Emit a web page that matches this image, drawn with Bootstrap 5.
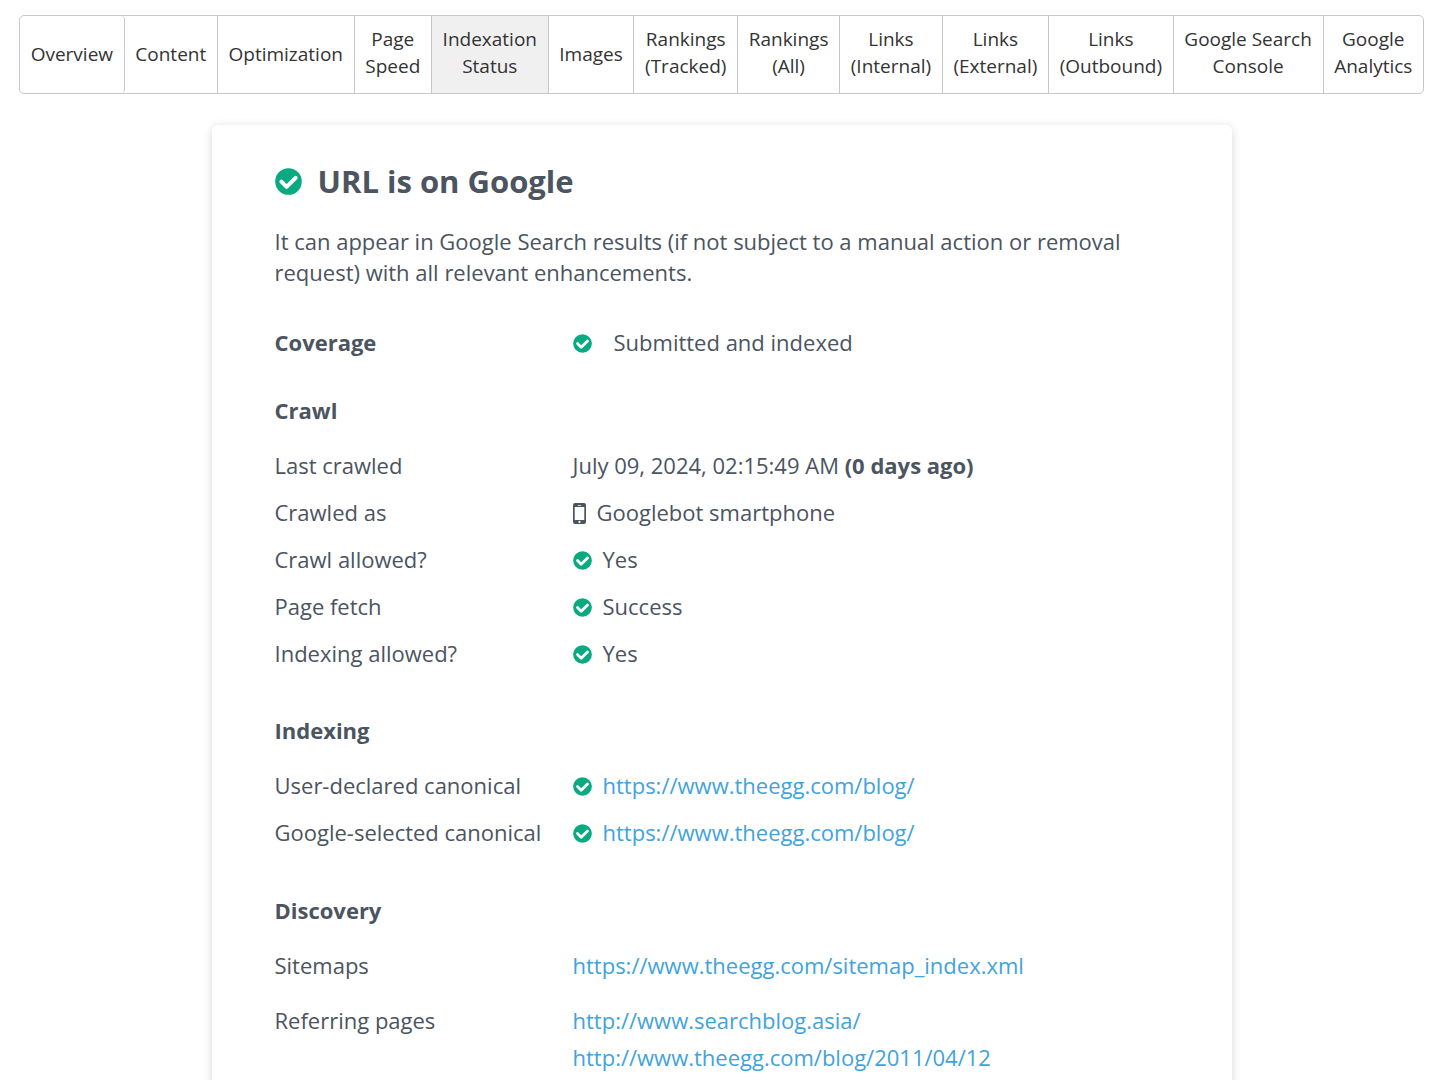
<!DOCTYPE html>
<html lang="en">
<head>
<meta charset="utf-8">
<meta name="viewport" content="width=device-width, initial-scale=1">
<title>Indexation Status</title>
<link rel="stylesheet" href="https://cdn.jsdelivr.net/npm/bootstrap@5.3.0/dist/css/bootstrap.min.css">
<style>
  body { font-family: "Open Sans", "Noto Sans", sans-serif; font-size: 22px; line-height: 31px; color: #4b545f; background: #fff; }
  .page-wrap { padding: 15px 16px 0 19px; }
  .report-tabs { border: 1px solid #c8c8c8; border-radius: 5px; min-height: 79px; }
  .report-tabs a { flex: 1 0 auto; display: flex; align-items: center; justify-content: center; text-align: center; padding: 0 10px; border-left: 1px solid #c8c8c8; color: #333; font-size: 19px; line-height: 27px; text-decoration: none; }
  .report-tabs a:first-child { border-left: 0; border-right: 1px solid #c8c8c8; border-radius: 4px; }
  .report-tabs a:nth-child(2) { border-left: 0; }
  .report-tabs a.two-line { padding-bottom: 4px; }
  .report-tabs a:hover, .report-tabs a.active { background: #f0f0f0; }
  .report { max-width: 1020px; margin: 31px auto 40px; padding: 34px 63px 63px; border: 0; border-radius: 6px; box-shadow: 0 2px 10px rgba(0, 0, 0, .16); color: inherit; }
  .report h1 { font-size: 31px; line-height: 44px; font-weight: 700; margin: 0; gap: 16px; }
  .report h2 { font-size: 22px; line-height: 31px; font-weight: 700; margin: 0 0 24px; }
  .intro { margin: 23px 0 39px; }
  .facts { display: grid; grid-template-columns: 298px minmax(0, 1fr); row-gap: 16px; margin: 0 0 47px; }
  .facts dt { font-weight: 400; }
  .facts dd { margin: 0; display: flex; align-items: center; gap: 11px; }
  .facts.coverage { margin-bottom: 37px; }
  .facts.coverage dt { font-weight: 700; }
  .facts.coverage dd { gap: 22px; }
  .facts.crawl { margin-bottom: 46px; }
  .facts.discovery { row-gap: 24px; margin-bottom: 0; }
  .facts.discovery dd { flex-direction: column; align-items: flex-start; gap: 6px; }
  .facts svg { margin-top: 2px; }
  .report a { color: #41a3dc; text-decoration: none; }
  .report a:hover { text-decoration: underline; }
  .ok { width: 19px; height: 19px; flex: none; }
  h1 .ok { width: 27px; height: 27px; }
  .phone { width: 13px; height: 21px; flex: none; }
</style>
</head>
<body>
<svg class="d-none" aria-hidden="true">
  <symbol id="ok" viewBox="0 0 27 27">
    <circle cx="13.5" cy="13.5" r="13.3" fill="#09a981"/>
    <path d="M6.400 13.600l5.200 5.200 9-9" fill="none" stroke="#fff" stroke-width="4" stroke-linecap="round" stroke-linejoin="round"/>
  </symbol>
</svg>
<div class="page-wrap">
  <nav class="report-tabs d-flex" aria-label="Report sections">
    <a href="#">Overview</a>
    <a href="#">Content</a>
    <a href="#">Optimization</a>
    <a href="#" class="two-line">Page<br>Speed</a>
    <a href="#" class="two-line active" aria-current="page">Indexation<br>Status</a>
    <a href="#">Images</a>
    <a href="#" class="two-line">Rankings<br>(Tracked)</a>
    <a href="#" class="two-line">Rankings<br>(All)</a>
    <a href="#" class="two-line">Links<br>(Internal)</a>
    <a href="#" class="two-line">Links<br>(External)</a>
    <a href="#" class="two-line">Links<br>(Outbound)</a>
    <a href="#" class="two-line">Google Search<br>Console</a>
    <a href="#" class="two-line">Google<br>Analytics</a>
  </nav>
  <main class="card report">
    <h1 class="d-flex align-items-center"><svg class="ok" aria-hidden="true"><use href="#ok"/></svg>URL is on Google</h1>
    <p class="intro">It can appear in Google Search results (if not subject to a manual action or removal request) with all relevant enhancements.</p>
    <dl class="facts coverage">
      <dt>Coverage</dt>
      <dd><svg class="ok" aria-hidden="true"><use href="#ok"/></svg>Submitted and indexed</dd>
    </dl>
    <h2>Crawl</h2>
    <dl class="facts crawl">
      <dt>Last crawled</dt>
      <dd><span>July 09, 2024, 02:15:49 AM <b>(0 days ago)</b></span></dd>
      <dt>Crawled as</dt>
      <dd><svg class="phone" viewBox="0 0 13 21" aria-hidden="true"><path fill="#4b545f" fill-rule="evenodd" d="M2 0h9a2 2 0 0 1 2 2v17a2 2 0 0 1-2 2H2a2 2 0 0 1-2-2V2a2 2 0 0 1 2-2zM1.700 4v13h9.600V4zM4.800 1.900v.9h3.400v-.9zM6.500 17.800a1.100 1.100 0 1 0 0 2.200 1.100 1.100 0 0 0 0-2.200z"/></svg>Googlebot smartphone</dd>
      <dt>Crawl allowed?</dt>
      <dd><svg class="ok" aria-hidden="true"><use href="#ok"/></svg>Yes</dd>
      <dt>Page fetch</dt>
      <dd><svg class="ok" aria-hidden="true"><use href="#ok"/></svg>Success</dd>
      <dt>Indexing allowed?</dt>
      <dd><svg class="ok" aria-hidden="true"><use href="#ok"/></svg>Yes</dd>
    </dl>
    <h2>Indexing</h2>
    <dl class="facts">
      <dt>User-declared canonical</dt>
      <dd><svg class="ok" aria-hidden="true"><use href="#ok"/></svg><a href="#">https://www.theegg.com/blog/</a></dd>
      <dt>Google-selected canonical</dt>
      <dd><svg class="ok" aria-hidden="true"><use href="#ok"/></svg><a href="#">https://www.theegg.com/blog/</a></dd>
    </dl>
    <h2>Discovery</h2>
    <dl class="facts discovery">
      <dt>Sitemaps</dt>
      <dd><a href="#">https://www.theegg.com/sitemap_index.xml</a></dd>
      <dt>Referring pages</dt>
      <dd><a href="#">http://www.searchblog.asia/</a><a href="#">http://www.theegg.com/blog/2011/04/12</a></dd>
    </dl>
  </main>
</div>
<script src="https://cdn.jsdelivr.net/npm/bootstrap@5.3.0/dist/js/bootstrap.bundle.min.js"></script>
</body>
</html>
